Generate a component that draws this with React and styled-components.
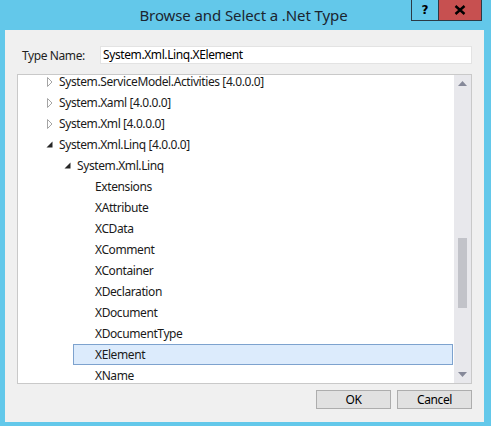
import React from "react";
import styled, { createGlobalStyle } from "styled-components";

const GlobalStyle = createGlobalStyle`
  * { box-sizing: border-box; margin: 0; padding: 0; }
  html, body {
    width: 491px;
    height: 426px;
    overflow: hidden;
    background: #63c8ea;
    font-family: "Segoe UI", "Noto Sans", "Liberation Sans", sans-serif;
    font-size: 12px;
    letter-spacing: -0.4px;
    color: #000;
  }
`;

const rows = [
  { label: "System.ServiceModel.Activities [4.0.0.0]", level: 0, state: "closed" },
  { label: "System.Xaml [4.0.0.0]", level: 0, state: "closed" },
  { label: "System.Xml [4.0.0.0]", level: 0, state: "closed" },
  { label: "System.Xml.Linq [4.0.0.0]", level: 0, state: "open" },
  { label: "System.Xml.Linq", level: 1, state: "open" },
  { label: "Extensions", level: 2 },
  { label: "XAttribute", level: 2 },
  { label: "XCData", level: 2 },
  { label: "XComment", level: 2 },
  { label: "XContainer", level: 2 },
  { label: "XDeclaration", level: 2 },
  { label: "XDocument", level: 2 },
  { label: "XDocumentType", level: 2 },
  { label: "XElement", level: 2, selected: true },
  { label: "XName", level: 2 },
];

function Expander({ state }) {
  if (state === "closed") {
    return (
      <svg width="6" height="10" viewBox="0 0 6 10">
        <polygon points="0.5,0.5 5,5 0.5,9.5" fill="none" stroke="#a5a5a5" strokeWidth="1" />
      </svg>
    );
  }
  if (state === "open") {
    return (
      <svg width="7" height="7" viewBox="0 0 7 7">
        <polygon points="6.5,0.5 6.5,6.5 0.5,6.5" fill="#262626" />
      </svg>
    );
  }
  return null;
}

function App() {
  return (
    <>
      <GlobalStyle />
      <Window>
        <TitleBar>
          <Title>Browse and Select a .Net Type</Title>
          <Controls>
            <HelpButton>?</HelpButton>
            <CloseButton>
              <svg width="12" height="10" viewBox="0 0 12 10">
                <path d="M1.5 1 L10.5 9 M10.5 1 L1.5 9" stroke="#000" strokeWidth="2.4" />
              </svg>
            </CloseButton>
          </Controls>
        </TitleBar>
        <Client>
          <NameRow>
            <Label>Type Name:</Label>
            <NameInput>System.Xml.Linq.XElement</NameInput>
          </NameRow>
          <Tree>
            <TreeList>
              {rows.map((r) => (
                <TreeRow key={r.label} $level={r.level}>
                  <ItemHeader $selected={r.selected}>
                    <ExpanderSlot>
                      <Expander state={r.state} />
                    </ExpanderSlot>
                    <ItemText>{r.label}</ItemText>
                  </ItemHeader>
                </TreeRow>
              ))}
            </TreeList>
            <ScrollBar>
              <ArrowSlot>
                <svg width="9" height="5" viewBox="0 0 9 5">
                  <polygon points="4.5,0 9,5 0,5" fill="#868999" />
                </svg>
              </ArrowSlot>
              <Track>
                <Thumb />
              </Track>
              <ArrowSlot>
                <svg width="9" height="5" viewBox="0 0 9 5">
                  <polygon points="0,0 9,0 4.5,5" fill="#868999" />
                </svg>
              </ArrowSlot>
            </ScrollBar>
          </Tree>
          <ButtonRow>
            <DialogButton>OK</DialogButton>
            <DialogButton>Cancel</DialogButton>
          </ButtonRow>
        </Client>
      </Window>
    </>
  );
}

const Window = styled.div`
  width: 491px;
  height: 426px;
  display: flex;
  flex-direction: column;
  padding: 0 7px 4px 5px;
`;

const TitleBar = styled.div`
  position: relative;
  height: 30px;
  display: flex;
  align-items: center;
  justify-content: center;
`;

const Title = styled.div`
  font-size: 15px;
  letter-spacing: -0.1px;
  color: #1b2530;
  margin-left: -2px;
  margin-top: -1px;
`;

const Controls = styled.div`
  position: absolute;
  top: 0;
  right: 2px;
  display: flex;
  border: 1px solid #2b3a46;
  border-top: none;
  height: 21px;
`;

const HelpButton = styled.div`
  width: 27px;
  height: 20px;
  border-right: 1px solid #2b3a46;
  display: flex;
  align-items: center;
  justify-content: center;
  font-family: "DejaVu Sans", sans-serif;
  font-weight: bold;
  font-size: 12px;
  letter-spacing: 0;
  color: #000;
`;

const CloseButton = styled.div`
  width: 42px;
  height: 20px;
  background: #c75050;
  display: flex;
  align-items: center;
  justify-content: center;
`;

const Client = styled.div`
  flex: 1;
  background: #f0f0f0;
  display: flex;
  flex-direction: column;
  padding: 16px 12px 0 12px;
`;

const NameRow = styled.div`
  display: flex;
  align-items: center;
  height: 18px;
`;

const Label = styled.div`
  width: 83px;
  padding-left: 5px;
  color: #1e1e1e;
`;

const NameInput = styled.div`
  flex: 1;
  height: 18px;
  background: #fff;
  border: 1px solid #e3e3e3;
  padding-left: 2px;
  line-height: 16px;
  color: #000;
  white-space: nowrap;
`;

const Tree = styled.div`
  margin-top: 10px;
  height: 310px;
  background: #fff;
  border: 1px solid #c9c9c9;
  display: flex;
  overflow: hidden;
`;

const TreeList = styled.div`
  flex: 1;
  margin-top: -4px;
  padding-right: 1px;
  display: flex;
  flex-direction: column;
`;

const TreeRow = styled.div`
  height: 21px;
  flex-shrink: 0;
  padding-left: ${(p) => 19 + p.$level * 18}px;
  display: flex;
`;

const ItemHeader = styled.div`
  flex: 1;
  display: flex;
  align-items: center;
  border: 1px solid ${(p) => (p.$selected ? "#7da2ce" : "transparent")};
  background: ${(p) => (p.$selected ? "#dcebfc" : "transparent")};
`;

const ExpanderSlot = styled.div`
  width: 21px;
  display: flex;
  justify-content: center;
  align-items: center;
  padding-left: 2px;
`;

const ItemText = styled.span`
  white-space: nowrap;
  color: #1a1a1a;
`;

const ScrollBar = styled.div`
  width: 17px;
  background: #e8e8ec;
  display: flex;
  flex-direction: column;
`;

const ArrowSlot = styled.div`
  height: 17px;
  display: flex;
  align-items: center;
  justify-content: center;
`;

const Track = styled.div`
  flex: 1;
  display: flex;
  justify-content: center;
  padding-top: 146px;
`;

const Thumb = styled.div`
  width: 9px;
  height: 70px;
  background: #c2c3c9;
`;

const ButtonRow = styled.div`
  display: flex;
  justify-content: flex-end;
  gap: 6px;
  margin-top: 6px;
`;

const DialogButton = styled.div`
  width: 75px;
  height: 19px;
  background: #e1e1e1;
  border: 1px solid #adadad;
  display: flex;
  align-items: center;
  justify-content: center;
  color: #000;
`;

export default App;
